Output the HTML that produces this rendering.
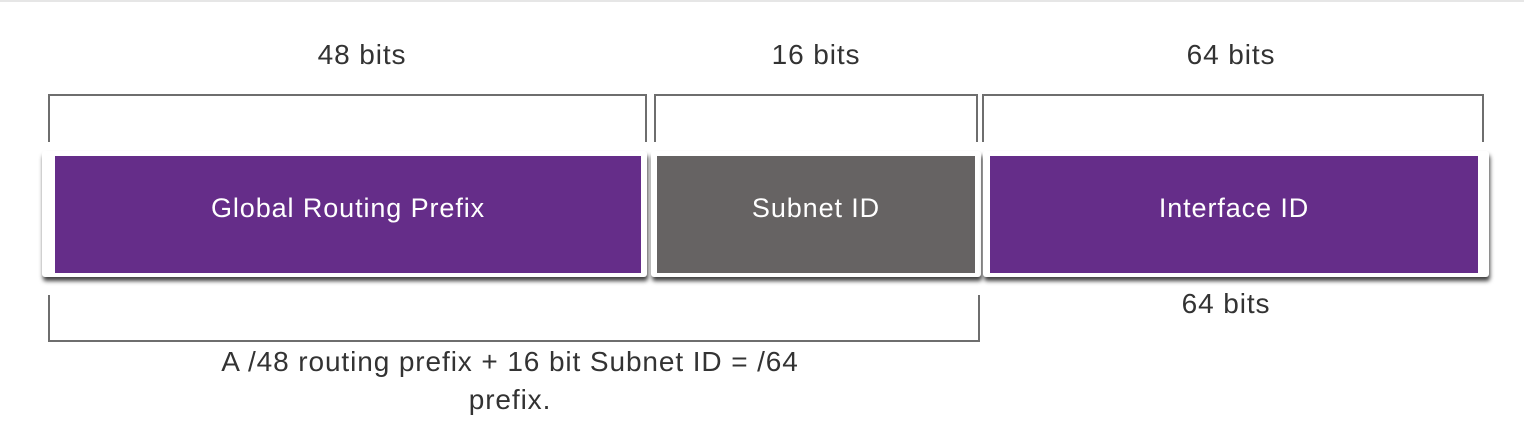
<!DOCTYPE html>
<html><head><style>
body{margin:0;width:1524px;height:427px;background:#fff;position:relative;overflow:hidden;font-family:"Liberation Sans",Arial,sans-serif;color:#333}
.t{position:absolute;font-size:28px;text-align:center;transform:translateX(-50%);white-space:nowrap;line-height:28px;letter-spacing:0.9px}
.br{position:absolute;border:2px solid #6e6e6e;border-bottom:none}
.bb{position:absolute;border:2px solid #6e6e6e;border-top:none}
.card{position:absolute;background:#fff;box-shadow:1px 4px 4px rgba(0,0,0,.75);border-radius:3px}
.in{position:absolute;color:#fff;font-size:27px;letter-spacing:0.9px;display:flex;align-items:center;justify-content:center;padding-bottom:12px;box-sizing:border-box}
</style></head><body>
<div style="position:absolute;left:0;top:0;width:1524px;height:2px;background:#e6e6e6"></div>
<div class="t" style="left:362px;top:41px">48 bits</div>
<div class="t" style="left:816px;top:41px">16 bits</div>
<div class="t" style="left:1231px;top:41px">64 bits</div>
<div class="br" style="left:48px;top:94px;width:595px;height:46px"></div>
<div class="br" style="left:654px;top:94px;width:320px;height:46px"></div>
<div class="br" style="left:982px;top:94px;width:498px;height:46px"></div>
<div class="card" style="left:42px;top:151px;width:605px;height:126px"></div>
<div class="card" style="left:651px;top:151px;width:330px;height:126px"></div>
<div class="card" style="left:983px;top:151px;width:506px;height:126px"></div>
<div class="in" style="left:55px;top:156px;width:586px;height:117px;background:#652d89">Global Routing Prefix</div>
<div class="in" style="left:657px;top:156px;width:318px;height:117px;background:#666363">Subnet ID</div>
<div class="in" style="left:990px;top:156px;width:488px;height:117px;background:#652d89">Interface ID</div>
<div class="t" style="left:1226px;top:290px">64 bits</div>
<div class="bb" style="left:48px;top:295px;width:928px;height:45px"></div>
<div class="t" style="left:510px;top:343px;line-height:38px">A /48 routing prefix + 16 bit Subnet ID = /64<br>prefix.</div>
</body></html>
